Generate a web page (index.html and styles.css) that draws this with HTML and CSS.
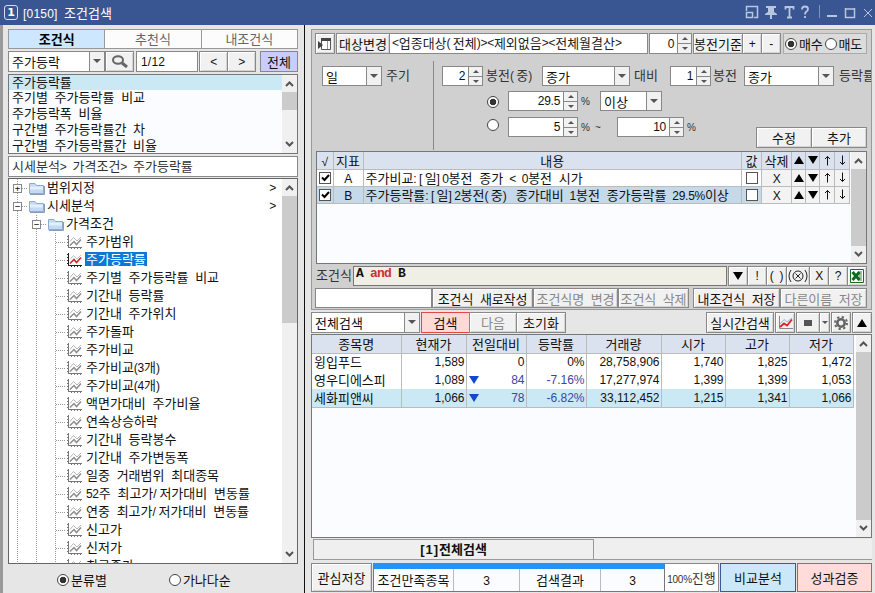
FILE: index.html
```html
<!DOCTYPE html>
<html lang="ko">
<head>
    <meta charset="UTF-8">
    <title>[0150] 조건검색</title>
    <link rel="stylesheet" href="styles.css">
</head>
<body>
<svg class="defs">
    <symbol id="up" viewBox="0 0 9 6"><path d="M1 5 4.500 1.500 8 5" fill="none" stroke="#555" stroke-width="2"/></symbol>
    <symbol id="down" viewBox="0 0 9 6"><path d="M1 1 4.500 4.500 8 1" fill="none" stroke="#555" stroke-width="2"/></symbol>
    <symbol id="tri-up" viewBox="0 0 10 8"><path d="M5 0 10 8H0Z"/></symbol>
    <symbol id="tri-down" viewBox="0 0 10 8"><path d="M0 0H10L5 8Z"/></symbol>
    <symbol id="arr-up" viewBox="0 0 7 10"><path d="M3.500 10V1M1 3.500 3.500 1 6 3.500" fill="none" stroke="#111"/></symbol>
    <symbol id="arr-down" viewBox="0 0 7 10"><path d="M3.500 0V9M1 6.500 3.500 9 6 6.500" fill="none" stroke="#111"/></symbol>
    <symbol id="folder" viewBox="0 0 16 13">
        <path d="M.5 11.500V1.500h5.500l1.500 2h7V11.500Z" fill="#c3d9f5" stroke="#8aaad8"/>
        <path d="M1 4.500h13v3H1Z" fill="#e2eefc"/>
        <path d="M15.500 4v8.500H1" fill="none" stroke="#8c9cb4"/>
    </symbol>
    <symbol id="chart" viewBox="0 0 15 14">
        <path d="M1.500 0V12M1 12.500H15M0 1.500H2M0 4.500H2M0 7.500H2M0 10.500H2M4.500 13v1M7.500 13v1M10.500 13v1M13.500 13v1" fill="none" stroke="#777"/>
        <path d="M3 6.500 6.500 2.500 10 6l4-4" fill="none" stroke="#b4b4b4"/>
        <path d="M3 10.500 7 6.500 9.500 9.500 14 4.500" fill="none" stroke="#8c8c8c" stroke-width="1.500"/>
    </symbol>
    <symbol id="chart-on" viewBox="0 0 15 14">
        <path d="M1.500 0V12M1 12.500H15M0 1.500H2M0 4.500H2M0 7.500H2M0 10.500H2M4.500 13v1M7.500 13v1M10.500 13v1M13.500 13v1" fill="none" stroke="#222"/>
        <path d="M3 6.500 6.500 2.500 10 6l4-4" fill="none" stroke="#b9c4cc"/>
        <path d="M3 10.500 7 6.500 9.500 9.500 14 4.500" fill="none" stroke="#d22" stroke-width="1.600"/>
    </symbol>
    <symbol id="chart-btn" viewBox="0 0 15 14">
        <path d="M1.500 0V12.500H15" fill="none" stroke="#888"/>
        <path d="M2 8 6 3.500 9 6l5-4" fill="none" stroke="#8fb4d8"/>
        <path d="M2 11 6 7.500 9 9.500 14 3.500" fill="none" stroke="#d22" stroke-width="1.800"/>
    </symbol>
</svg>

<div class="title">
    <span class="win-no">1</span>
    <span><i class="m no">[0150] </i>조건검색</span>
    <svg class="win-btns" width="130" height="25" viewBox="0 0 130 25" fill="none" stroke="#b9c6e2">
        <path d="M1.500 11V6.500h11v11H9M1.500 12.500h6v5h-6Z" stroke-width="1.500"/>
        <path d="M21 6h10v2h-2v4l3 2v1H20v-1l3-2V8h-2ZM25 15h2v4h-2Z" fill="#b9c6e2" stroke="none"/>
        <path d="M40.500 9.500V7h8v2.500M44.500 7v10M42 17.500h5" stroke-width="1.800"/>
        <path d="M57 9.500q0-3 3-3t3 2.500q0 1.500-1.500 2.500T60 14.500M60 16v2" stroke-width="1.800"/>
        <path d="M74.500 5v13" stroke="#8094c0"/>
        <path d="M82 16h10" stroke-width="2"/>
        <path d="M100.500 8v9.500h9V8M100 9h10" stroke-width="1.500"/>
        <path d="M119 9l8 8m0-8l-8 8"/>
    </svg>
</div>

<div class="main">
    <!-- 왼쪽: 조건식 트리 -->
    <div class="left">
        <div class="tabs"><b>조건식</b><span>추천식</span><span>내조건식</span></div>
        <div class="find">
            <div class="combo w94"><span>주가등락</span><i class="dd"></i></div>
            <div class="btn w29">
                <svg width="18" height="13" fill="none" stroke="#666"><ellipse cx="7" cy="5" rx="5" ry="3.800" stroke-width="2"/><path d="M11 8l5 4" stroke-width="3"/></svg>
            </div>
            <div class="input page"><i class="m">1/12</i></div>
            <div class="btn w29 prev"><i class="m">&lt;</i></div>
            <div class="btn w29"><i class="m">&gt;</i></div>
            <div class="btn all">전체</div>
        </div>
        <div class="list">
            <div class="list-body">
                <p class="on">주가등락률</p>
                <p>주기별 주가등락률 비교</p>
                <p>주가등락폭 비율</p>
                <p>구간별 주가등락률간 차</p>
                <p>구간별 주가등락률간 비율</p>
            </div>
            <div class="scroll"><svg><use href="#up"/></svg><i class="thumb t18"></i><svg><use href="#down"/></svg></div>
        </div>
        <div class="path">시세분석<i class="m">&gt; </i>가격조건<i class="m">&gt; </i>주가등락률</div>
        <div class="tree">
            <div class="tree-body">
                <div class="row"><i class="g h"><b>+</b></i><svg class="fd"><use href="#folder"/></svg><span>범위지정</span><i class="m more">&gt;</i></div>
                <div class="row"><i class="g h"><b>−</b></i><svg class="fd"><use href="#folder"/></svg><span>시세분석</span><i class="m more">&gt;</i></div>
                <div class="row"><i class="g"></i><i class="g h"><b>−</b></i><svg class="fd"><use href="#folder"/></svg><span>가격조건</span></div>
                <div class="row"><i class="g"></i><i class="g"></i><i class="g h"></i><svg class="ch"><use href="#chart"/></svg><span>주가범위</span></div>
                <div class="row"><i class="g"></i><i class="g"></i><i class="g h"></i><svg class="ch"><use href="#chart-on"/></svg><span class="sel">주가등락률</span></div>
                <div class="row"><i class="g"></i><i class="g"></i><i class="g h"></i><svg class="ch"><use href="#chart"/></svg><span>주기별 주가등락률 비교</span></div>
                <div class="row"><i class="g"></i><i class="g"></i><i class="g h"></i><svg class="ch"><use href="#chart"/></svg><span>기간내 등락률</span></div>
                <div class="row"><i class="g"></i><i class="g"></i><i class="g h"></i><svg class="ch"><use href="#chart"/></svg><span>기간내 주가위치</span></div>
                <div class="row"><i class="g"></i><i class="g"></i><i class="g h"></i><svg class="ch"><use href="#chart"/></svg><span>주가돌파</span></div>
                <div class="row"><i class="g"></i><i class="g"></i><i class="g h"></i><svg class="ch"><use href="#chart"/></svg><span>주가비교</span></div>
                <div class="row"><i class="g"></i><i class="g"></i><i class="g h"></i><svg class="ch"><use href="#chart"/></svg><span>주가비교<i class="m">(3</i>개<i class="m">)</i></span></div>
                <div class="row"><i class="g"></i><i class="g"></i><i class="g h"></i><svg class="ch"><use href="#chart"/></svg><span>주가비교<i class="m">(4</i>개<i class="m">)</i></span></div>
                <div class="row"><i class="g"></i><i class="g"></i><i class="g h"></i><svg class="ch"><use href="#chart"/></svg><span>액면가대비 주가비율</span></div>
                <div class="row"><i class="g"></i><i class="g"></i><i class="g h"></i><svg class="ch"><use href="#chart"/></svg><span>연속상승하락</span></div>
                <div class="row"><i class="g"></i><i class="g"></i><i class="g h"></i><svg class="ch"><use href="#chart"/></svg><span>기간내 등락봉수</span></div>
                <div class="row"><i class="g"></i><i class="g"></i><i class="g h"></i><svg class="ch"><use href="#chart"/></svg><span>기간내 주가변동폭</span></div>
                <div class="row"><i class="g"></i><i class="g"></i><i class="g h"></i><svg class="ch"><use href="#chart"/></svg><span>일중 거래범위 최대종목</span></div>
                <div class="row"><i class="g"></i><i class="g"></i><i class="g h"></i><svg class="ch"><use href="#chart"/></svg><span><i class="m">52</i>주 최고가<i class="m sl">/</i>저가대비 변동률</span></div>
                <div class="row"><i class="g"></i><i class="g"></i><i class="g h"></i><svg class="ch"><use href="#chart"/></svg><span>연중 최고가<i class="m sl">/</i>저가대비 변동률</span></div>
                <div class="row"><i class="g"></i><i class="g"></i><i class="g h"></i><svg class="ch"><use href="#chart"/></svg><span>신고가</span></div>
                <div class="row"><i class="g"></i><i class="g"></i><i class="g h"></i><svg class="ch"><use href="#chart"/></svg><span>신저가</span></div>
                <div class="row"><i class="g"></i><i class="g"></i><i class="g h"></i><svg class="ch"><use href="#chart"/></svg><span>최고종가</span></div>
            </div>
            <div class="scroll"><svg><use href="#up"/></svg><i class="thumb t127"></i><svg><use href="#down"/></svg></div>
        </div>
        <div class="sort"><i class="radio on"></i><span>분류별</span><i class="radio second"></i><span>가나다순</span></div>
    </div>

    <!-- 오른쪽: 조건 설정 + 검색결과 -->
    <div class="right">
        <div class="panel">
            <div class="target">
                <div class="btn w20">
                    <svg width="14" height="14"><path d="M3.500 1.500h9v11h-9Z" fill="#fff" stroke="#555"/><path d="M3 1h10v3H3ZM0 4l5 4-5 4Z" fill="#444"/><path d="M9.500 4v8" stroke="#999"/></svg>
                </div>
                <div class="btn w54">대상변경</div>
                <div class="input range"><i class="m">&lt;</i>업종대상<i class="m p">(</i>전체<i class="m">)&gt;&lt;</i>제외없음<i class="m">&gt;&lt;</i>전체월결산<i class="m">&gt;</i></div>
                <div class="spin w43"><i class="m">0</i><i class="ud"></i></div>
                <div class="btn w50">봉전기준</div>
                <div class="btn w20"><i class="m">+</i></div>
                <div class="btn w20"><i class="m">-</i></div>
                <div class="buysell"><i class="radio on"></i>매수<i class="radio"></i>매도</div>
            </div>
            <div class="setting">
                <div class="period"><div class="combo w60"><span>일</span><i class="dd"></i></div><span>주기</span></div>
                <div class="opts">
                    <div class="line">
                        <div class="spin w41"><i class="m">2</i><i class="ud"></i></div>
                        <span class="t1">봉전<i class="m p">(</i>중<i class="m p">)</i></span>
                        <div class="combo w87"><span>종가</span><i class="dd"></i></div>
                        <span class="t2">대비</span>
                        <div class="spin w41"><i class="m">1</i><i class="ud"></i></div>
                        <span class="t3">봉전</span>
                        <div class="combo w89"><span>종가</span><i class="dd"></i></div>
                        <span class="t4">등락률</span>
                    </div>
                    <div class="line l2">
                        <i class="radio on"></i>
                        <div class="spin w70"><i class="m">29.5</i><i class="ud"></i></div>
                        <span class="t5"><i class="m pc">%</i></span>
                        <div class="combo w62"><span>이상</span><i class="dd"></i></div>
                    </div>
                    <div class="line l3">
                        <i class="radio"></i>
                        <div class="spin w70"><i class="m">5</i><i class="ud"></i></div>
                        <span class="t6"><i class="m pc">% ~</i></span>
                        <div class="spin w67"><i class="m">10</i><i class="ud"></i></div>
                        <span class="t7"><i class="m pc">%</i></span>
                        <div class="edit"><div class="btn">수정</div><div class="btn">추가</div></div>
                    </div>
                </div>
            </div>
            <div class="conds">
                <table>
                    <colgroup><col class="c1"><col class="c2"><col><col class="c4"><col class="c5"><col class="c6"><col class="c6"><col class="c7"><col class="c7"></colgroup>
                    <tr class="head">
                        <td><i class="m">√</i></td><td>지표</td><td class="c">내용</td><td>값</td><td>삭제</td>
                        <td><svg class="tri"><use href="#tri-up"/></svg></td><td><svg class="tri"><use href="#tri-down"/></svg></td>
                        <td><svg class="arr"><use href="#arr-up"/></svg></td><td><svg class="arr"><use href="#arr-down"/></svg></td>
                    </tr>
                    <tr>
                        <td><i class="chk"><svg width="9" height="8"><path d="M1 3.500 3.500 6 8 1" fill="none" stroke="#000" stroke-width="2"/></svg></i></td>
                        <td><i class="m">A</i></td>
                        <td class="l">주가비교<i class="m p">:[</i>일<i class="m p">]</i><i class="m">0</i>봉전 종가<i class="m"> &lt; 0</i>봉전 시가</td>
                        <td><i class="chk"></i></td><td class="f"><i class="m">X</i></td>
                        <td class="f"><svg class="tri"><use href="#tri-up"/></svg></td><td class="f"><svg class="tri"><use href="#tri-down"/></svg></td>
                        <td class="f"><svg class="arr"><use href="#arr-up"/></svg></td><td class="f"><svg class="arr"><use href="#arr-down"/></svg></td>
                    </tr>
                    <tr class="on">
                        <td><i class="chk"><svg width="9" height="8"><path d="M1 3.500 3.500 6 8 1" fill="none" stroke="#000" stroke-width="2"/></svg></i></td>
                        <td><i class="m">B</i></td>
                        <td class="l">주가등락률<i class="m p">:[</i>일<i class="m p">]</i><i class="m">2</i>봉전<i class="m p">(</i>중<i class="m p">)</i> 종가대비<i class="m"> 1</i>봉전 종가등락률<i class="m"> 29.5%</i>이상</td>
                        <td><i class="chk"></i></td><td class="f"><i class="m">X</i></td>
                        <td class="f"><svg class="tri"><use href="#tri-up"/></svg></td><td class="f"><svg class="tri"><use href="#tri-down"/></svg></td>
                        <td class="f"><svg class="arr"><use href="#arr-up"/></svg></td><td class="f"><svg class="arr"><use href="#arr-down"/></svg></td>
                    </tr>
                </table>
                <div class="scroll"><svg><use href="#up"/></svg><i class="thumb t77"></i><svg><use href="#down"/></svg></div>
            </div>
            <div class="expr">
                <span class="lbl">조건식</span>
                <div class="formula">A <em>and</em> B</div>
                <div class="btn w20"><svg class="tri"><use href="#tri-down"/></svg></div>
                <div class="btn w20"><i class="m">!</i></div>
                <div class="btn w21"><i class="m">( )</i></div>
                <div class="btn w24"><svg width="22" height="14" fill="none" stroke="#222"><path d="M4 1Q0 7 4 13M18 1q4 6 0 12M8.500 4.500l5 5m0-5l-5 5"/><circle cx="11" cy="7" r="5"/></svg></div>
                <div class="btn w20"><i class="m">X</i></div>
                <div class="btn w20"><i class="m">?</i></div>
                <div class="btn w20"><svg width="14" height="14"><path d="M.5.500h13v13H.500Z" fill="#fff" stroke="#176b22"/><path d="M9 2h3v10H9Z" fill="#9ac79d"/><path d="M2.500 3l7 8m0-8l-7 8" stroke="#0b6b1a" stroke-width="3"/></svg></div>
            </div>
            <div class="save">
                <div class="input w116"></div>
                <div class="btn w100">조건식 새로작성</div>
                <div class="btn w84 off">조건식명 변경</div>
                <div class="btn w70 off">조건식 삭제</div>
                <div class="btn w86 mine">내조건식 저장</div>
                <div class="btn w86 off">다른이름 저장</div>
            </div>
        </div>

        <div class="tools">
            <div class="combo w109"><span>전체검색</span><i class="dd"></i></div>
            <div class="btn search">검색</div>
            <div class="btn w48 off">다음</div>
            <div class="btn w49">초기화</div>
            <div class="btn w68 live">실시간검색</div>
            <div class="btn w20"><svg width="15" height="14"><use href="#chart-btn"/></svg></div>
            <div class="btn w24"><i class="stop"></i></div>
            <div class="btn w11"><i class="dd-s"></i></div>
            <div class="btn w20"><svg width="14" height="14" fill="none" stroke="#666"><circle cx="7" cy="7" r="3.700" stroke-width="2.600"/><circle cx="7" cy="7" r="6" stroke-width="2" stroke-dasharray="2.300 2.410"/></svg></div>
            <div class="btn w20"><svg class="tri"><use href="#tri-up"/></svg></div>
        </div>

        <div class="result">
            <table>
                <colgroup><col class="r1"><col class="r2"><col class="r3"><col class="r3"><col class="r5"><col class="r6"><col class="r6"><col class="r6"></colgroup>
                <tr class="head"><td>종목명</td><td>현재가</td><td>전일대비</td><td>등락률</td><td>거래량</td><td>시가</td><td>고가</td><td>저가</td></tr>
                <tr><td>윙입푸드</td><td>1,589</td><td>0</td><td>0%</td><td>28,758,906</td><td>1,740</td><td>1,825</td><td>1,472</td></tr>
                <tr><td>영우디에스피</td><td>1,089</td><td class="dn"><svg class="tri"><use href="#tri-down"/></svg>84</td><td class="dn">-7.16%</td><td>17,277,974</td><td>1,399</td><td>1,399</td><td>1,053</td></tr>
                <tr class="on"><td>세화피앤씨</td><td>1,066</td><td class="dn"><svg class="tri"><use href="#tri-down"/></svg>78</td><td class="dn">-6.82%</td><td>33,112,452</td><td>1,215</td><td>1,341</td><td>1,066</td></tr>
            </table>
            <div class="scroll"><svg><use href="#up"/></svg><i class="thumb full"></i><svg><use href="#down"/></svg></div>
        </div>
        <div class="rtabs"><b><i class="m">[1]</i>전체검색</b></div>
        <div class="foot">
            <div class="btn fav">관심저장</div>
            <div class="stat"><span class="s1">조건만족종목</span><span class="s2"><i class="m">3</i></span><span class="s3">검색결과</span><span class="s4"><i class="m">3</i></span></div>
            <div class="prog"><i class="m pc">100%</i>진행</div>
            <div class="btn cmp">비교분석</div>
            <div class="btn perf">성과검증</div>
        </div>
    </div>
</div>
</body>
</html>
```
FILE: styles.css
```css
* {
    margin: 0;
    padding: 0;
    box-sizing: border-box;
}

body {
    width: 875px;
    height: 593px;
    overflow: hidden;
    background: #e6e6e6;
    color: #111;
    font: 13px/18px "Noto Sans CJK KR", sans-serif;
    word-spacing: 3.1px;
    white-space: nowrap;
}

i, em {
    font-style: normal;
}

svg {
    display: block;
    flex: none;
}

.defs {
    width: 0;
    height: 0;
    float: left;
}

/* 반각 글자 */
.m {
    font-family: "Liberation Sans", sans-serif;
    font-size: 12px;
    line-height: 1;
    letter-spacing: -.3px;
    word-spacing: 2.9px;
    white-space: pre;
}

.m.p {
    letter-spacing: 2.3px;
}

.m.sl {
    letter-spacing: 2.7px;
}

.m.no {
    letter-spacing: .2px;
}

.pc {
    font-size: 10px;
}

/* 타이틀바 */
.title {
    height: 25px;
    padding-left: 4px;
    display: flex;
    align-items: center;
    background: #3a5692;
    color: #fff;
}

.win-no {
    width: 14px;
    height: 15px;
    margin-right: 5px;
    border: 1px solid #d5def0;
    border-radius: 3px;
    font: bold 11px/13px "DejaVu Sans", sans-serif;
    text-align: center;
}

.win-btns {
    margin-left: auto;
}

.main {
    height: 568px;
    display: flex;
}

.left {
    width: 305px;
    padding: 4px 6px 0 5px;
    border-left: 3px solid #999;
    border-right: 1px solid #111;
    flex: none;
}

.right {
    width: 561px;
    margin-left: 6px;
    padding-top: 4px;
    flex: none;
}

/* 공통 컨트롤 */
.btn, .input, .combo, .spin {
    height: 21px;
    display: flex;
    align-items: center;
    flex: none;
    border: 1px solid #888;
    background: #fff;
    line-height: 19px;
}

.btn {
    justify-content: center;
    background: #f1f1f1;
    box-shadow: inset 1px 1px #fff, inset -1px -1px #d4d4d4;
}

.btn + .btn {
    margin-left: -1px;
}

.off {
    color: #888;
}

.combo span {
    flex: 1;
    padding-left: 3px;
    line-height: 17px;
}

.combo .dd {
    width: 15px;
    align-self: stretch;
    border-left: 1px solid #888;
    background: #f1f1f1;
}

.dd::before, .dd-s::before {
    content: "";
    display: block;
    width: 0;
    margin: 7px auto 0;
    border: 4px solid transparent;
    border-top-color: #555;
    border-bottom: 0;
}

.dd-s::before {
    margin-top: 0;
    border-width: 3px 3px 0;
}

.spin .m {
    flex: 1;
    text-align: right;
    padding-right: 3px;
}

.ud {
    width: 14px;
    align-self: stretch;
    border-left: 1px solid #888;
    background: linear-gradient(#f1f1f1 9px, #888 9px, #888 10px, #f1f1f1 10px);
}

.ud::before, .ud::after {
    content: "";
    display: block;
    width: 0;
    margin: 3px auto 0;
    border: 3px solid transparent;
    border-top: 0;
    border-bottom-color: #555;
}

.ud::after {
    margin-top: 7px;
    border: 3px solid transparent;
    border-bottom: 0;
    border-top-color: #555;
}

.radio {
    width: 12px;
    height: 12px;
    flex: none;
    border: 1px solid #444;
    border-radius: 50%;
    background: #fff;
}

.radio.on {
    background: radial-gradient(circle, #333 3px, #fff 3.6px);
}

.scroll {
    width: 15px;
    flex: none;
    display: flex;
    flex-direction: column;
    align-items: center;
    padding: 6px 0;
    background: #f0f0f0;
}

.scroll svg {
    width: 9px;
    height: 6px;
}

.scroll svg:last-child {
    margin-top: auto;
}

.thumb {
    width: 15px;
    margin-top: 5px;
    background: #cbcbcb;
}

.t18 { height: 18px; }
.t77 { height: 77px; }
.t127 { height: 127px; }
.thumb.full { flex: 1; margin-bottom: 5px; }

.w11 { width: 11px; }
.w20 { width: 20px; }
.w21 { width: 21px; }
.w24 { width: 24px; }
.w29 { width: 29px; }
.w41 { width: 41px; }
.w43 { width: 43px; }
.w48 { width: 48px; }
.w49 { width: 50px; }
.w50 { width: 50px; }
.w54 { width: 54px; }
.w60 { width: 60px; }
.w62 { width: 62px; }
.w67 { width: 67px; }
.w68 { width: 68px; }
.w70 { width: 70px; }
.w84 { width: 84px; }
.w86 { width: 86px; }
.w87 { width: 88px; }
.w89 { width: 90px; }
.w94 { width: 97px; }
.w100 { width: 100px; }
.w109 { width: 109px; }
.w116 { width: 117px; }

.tri {
    width: 10px;
    height: 8px;
    margin: 0 auto;
}

.arr {
    width: 7px;
    height: 11px;
    margin: 0 auto;
}

/* 왼쪽 */
.tabs {
    height: 20px;
    display: flex;
    border: 1px solid #999;
    background: #fcfcfc;
    color: #666;
    text-align: center;
    line-height: 17px;
}

.tabs > * {
    flex: 1;
}

.tabs > * + * {
    border-left: 1px solid #999;
}

.tabs b {
    background: #cde7ff;
    color: #000;
}

.find {
    display: flex;
    margin-top: 2px;
}

.page {
    width: 62px;
    margin-left: 2px;
    padding-left: 4px;
}

.page .m {
    letter-spacing: .2px;
}

.find .prev {
    margin-left: 1px;
}

.find .all {
    width: 38px;
    margin-left: auto;
    background: #c8cdfb;
    box-shadow: none;
}

.list {
    height: 80px;
    margin-top: 2px;
    display: flex;
    border: 1px solid #777;
    background: #fbfcff;
}

.list-body {
    flex: 1;
}

.list p {
    height: 16px;
    padding-left: 3px;
    line-height: 14px;
}

.list p.on {
    height: 15px;
    background: #cbe8f5;
}

.path {
    height: 21px;
    margin-top: 2px;
    padding-left: 3px;
    border: 1px solid #888;
    background: #fff;
    color: #333;
    line-height: 17px;
}

.tree {
    height: 386px;
    margin-top: 1px;
    display: flex;
    border: 1px solid #666;
    background: #fff;
    overflow: hidden;
}

.tree-body {
    flex: 1;
    overflow: hidden;
}

.row {
    height: 18px;
    display: flex;
    align-items: center;
}

.g {
    width: 19px;
    height: 18px;
    flex: none;
    padding: 5px 0 0 4px;
    background: repeating-linear-gradient(#999 0 1px, transparent 1px 2px) 8px 0 / 1px 18px no-repeat;
}

.g.h {
    background: repeating-linear-gradient(#999 0 1px, transparent 1px 2px) 8px 0 / 1px 18px no-repeat,
        repeating-linear-gradient(90deg, #999 0 1px, transparent 1px 2px) 9px 9px / 10px 1px no-repeat;
}

.g b {
    display: block;
    width: 9px;
    height: 9px;
    border: 1px solid #888;
    background: #fff;
    font: 9px/7px "DejaVu Sans Mono", monospace;
    text-align: center;
}

.fd {
    width: 16px;
    height: 13px;
    margin: 0 1px 0 1px;
}

.ch {
    width: 15px;
    height: 14px;
    margin: 0 3px 0 1px;
}

.row span {
    margin-bottom: 2px;
    padding: 0 1px;
    line-height: 14px;
}

.row .sel {
    background: #0b78d8;
    color: #fff;
}

.more {
    margin-left: auto;
    margin-right: 6px;
}

.sort {
    display: flex;
    align-items: center;
    margin: 7px 0 0 49px;
}

.sort span {
    margin-left: 2px;
}

.second {
    margin-left: 62px;
}

/* 조건 설정 */
.panel {
    height: 281px;
    padding: 3px 4px 0 3px;
    border: 1px solid #999;
    background: #d0d0d0;
}

.target {
    display: flex;
}

.target .w54 {
    margin-left: 1px;
}

.range {
    width: 259px;
    padding: 0 0 2px 2px;
    margin-right: 1px;
    margin-left: -1px;
    color: #222;
}

.target .spin {
    height: 21px;
}

.target .w50 {
    margin-left: 1px;
}

.buysell {
    width: 84px;
    height: 21px;
    margin-left: auto;
    padding-left: 1px;
    display: flex;
    align-items: center;
    gap: 2px;
    border: 1px solid #aaa;
    background: #dcdcdc;
    letter-spacing: -.2px;
}

.setting {
    display: flex;
    height: 89px;
    margin-top: 7px;
    margin-right: -4px;
    color: #333;
}

.period {
    width: 119px;
    padding: 5px 0 0 7px;
    display: flex;
    gap: 4px;
    border-right: 1px solid #888;
}

.opts {
    width: 437px;
    padding: 5px 0 0 8px;
    overflow: hidden;
}

.line {
    display: flex;
    height: 20px;
    line-height: 18px;
}

.line > * {
    flex: none;
}

.combo, .spin {
    color: #111;
    height: 20px;
}

.find .combo {
    height: 21px;
}

.t1 { width: 59px; padding-left: 3px; }
.t2 { width: 40px; padding-left: 4px; }
.t3 { width: 33px; padding-left: 2px; }
.t4 { padding-left: 5px; }
.t5 { width: 22px; padding-left: 3px; }
.t6 { width: 39px; padding-left: 3px; }
.t7 { padding-left: 3px; }

.l2 {
    margin-top: 5px;
}

.l3 {
    margin-top: 6px;
}

.line .radio {
    margin: 5px 9px 0 45px;
}

.l3 .radio {
    margin-top: 2px;
}

.edit {
    display: flex;
    margin: 10px 4px 0 auto;
    color: #111;
}

.edit .btn {
    width: 56px;
}

table {
    border-collapse: collapse;
    table-layout: fixed;
}

.conds {
    height: 113px;
    margin: 1px 0 0 1px;
    display: flex;
    justify-content: space-between;
    border: 1px solid #777;
    background: #fbfcff;
}

.conds table {
    width: 533px;
    height: 51px;
}

.conds td {
    height: 17px;
    border-right: 1px solid #bbb;
    border-bottom: 1px solid #bbb;
    background: #fff;
    text-align: center;
    line-height: 15px;
}

.conds td.l {
    text-align: left;
    padding-left: 2px;
}

.conds .on td {
    background: #c5d9e9;
}

.conds td.f {
    background: #f3f3f3;
}

.conds .head td, .result .head td {
    background: #dbe2ef;
}

.c1 { width: 16px; }
.c2 { width: 30px; }
.c4 { width: 20px; }
.c5 { width: 30px; }
.c6 { width: 14px; }
.c7 { width: 15px; }

.chk {
    width: 12px;
    height: 12px;
    margin: 0 auto;
    padding: 1px 0 0 1px;
    display: block;
    border: 1px solid #555;
    background: #fff;
}

.expr, .save {
    display: flex;
    margin-top: 2px;
}

.expr .lbl {
    width: 38px;
    padding-left: 1px;
    color: #333;
    line-height: 18px;
}

.formula {
    width: 374px;
    height: 20px;
    margin-right: 1px;
    padding-left: 2px;
    border: 1px solid #777;
    background: #efefe6;
    font: bold 13px/14px "Liberation Mono", monospace;
    letter-spacing: -.8px;
    word-spacing: 0;
}

.formula em {
    color: #c83232;
}

.expr .btn {
    height: 20px;
}

.save .btn, .save .input {
    margin-left: 0;
    height: 20px;
    letter-spacing: -.1px;
}

.save .w100 { width: 101px; }
.save .w84 { width: 85px; }
.save .w70 { width: 71px; }
.save .w86 { width: 87px; }

.save .mine {
    margin-left: auto;
}

/* 검색결과 */
.tools {
    display: flex;
    margin-top: 2px;
}

.tools .combo {
    height: 21px;
}

.tools .search {
    width: 49px;
    margin-left: 1px;
    border-color: #e04a42;
    background: #ffd9d6;
    box-shadow: none;
}

.tools .live {
    margin-left: auto;
    letter-spacing: -.1px;
}

.tools .live ~ .btn {
    margin-left: 1px;
}

.tools .btn.w11 {
    margin-left: -1px;
}

.stop {
    width: 8px;
    height: 6px;
    background: #555;
}

.result {
    height: 204px;
    margin-top: 1px;
    display: flex;
    justify-content: space-between;
    border: 1px solid #777;
    background: #fbfcff;
}

.result table {
    width: 541px;
    height: 72px;
}

.result td {
    height: 18px;
    padding-right: 1px;
    border-right: 1px solid #bbb;
    background: #fff;
    font: 12px/16px "Liberation Sans", sans-serif;
    text-align: right;
}

.result .head td, .result td:first-child {
    padding: 0;
    font: 13px/16px "Noto Sans CJK KR", sans-serif;
    text-align: center;
}

.result tr:not(.head) td:first-child {
    padding-left: 2px;
    text-align: left;
}

.result .on td {
    background: #cbe8f5;
    border-bottom: 1px solid #bbb;
}

.result .head td {
    border-bottom: 1px solid #bbb;
}

.result td.dn {
    color: #3548a8;
}

.dn .tri {
    float: left;
    margin: 4px 0 0 2px;
    fill: #1248d0;
}

.r1 { width: 89px; }
.r2 { width: 65px; }
.r3 { width: 60px; }
.r5 { width: 75px; }
.r6 { width: 64px; }

.rtabs {
    height: 21px;
    margin: 1px 0 0 2px;
    display: flex;
    background: #efefef;
}

.rtabs b {
    width: 281px;
    border: 1px solid #999;
    text-align: center;
    line-height: 17px;
}

.rtabs .m {
    font-size: 13px;
    letter-spacing: 1px;
}

.rtabs::after {
    content: "";
    flex: 1;
    border-bottom: 1px solid #999;
}

.foot {
    display: flex;
    margin-top: 3px;
}

.foot > * {
    height: 29px;
    line-height: 27px;
}

.fav {
    width: 61px;
}

.stat {
    width: 292px;
    margin-left: 1px;
    display: flex;
    border: 1px solid #777;
    border-top: 6px solid #2493f5;
    background: #fbfcff;
    line-height: 21px;
    text-align: center;
}

.stat span + span {
    border-left: 1px solid #bbb;
}

.s1 { width: 79px; }
.s2 { width: 66px; }
.s3 { width: 81px; }
.s4 { flex: 1; }

.prog {
    width: 54px;
    margin-right: 1px;
    border: 1px solid #888;
    border-left: 0;
    background: #fff;
    color: #333;
    text-align: center;
}

.foot .cmp {
    width: 76px;
    border-color: #3a5aa0;
    background: #cbe8f8;
    box-shadow: none;
}

.foot .perf {
    flex: 1;
    margin-left: 1px;
    border-color: #d8504a;
    background: #ffdcd9;
    box-shadow: none;
}
```
